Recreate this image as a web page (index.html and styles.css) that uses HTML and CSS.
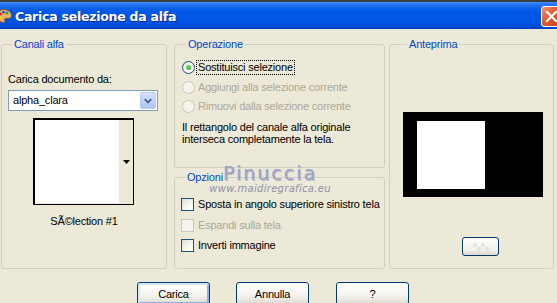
FILE: index.html
```html
<!DOCTYPE html>
<html>
<head>
<meta charset="utf-8">
<title>Carica selezione da alfa</title>
<link rel="stylesheet" href="styles.css">
</head>
<body>
<div class="window">
  <div class="titlebar">
    <svg class="app-icon" width="16" height="16" viewBox="0 0 16 16">
      <path d="M8 1.5C3.5 1.5 0.5 4.5 0.8 8.5c0.3 3.5 3.3 6 6.5 6 1.6 0 2-1 1.4-2-0.6-1 0-2 1.4-2h2.4c2 0 3.2-1.4 3-3.4C15.2 3.8 12 1.5 8 1.5z" fill="#e9b066" stroke="#7a4a18" stroke-width="0.8"/>
      <circle cx="4.5" cy="6" r="1.4" fill="#e02020"/>
      <circle cx="7.5" cy="4.2" r="1.4" fill="#2050e0"/>
      <circle cx="11" cy="5" r="1.4" fill="#20a030"/>
      <circle cx="4.2" cy="9.8" r="1.4" fill="#f0e020"/>
    </svg>
    <span class="title">Carica selezione da alfa</span>
    <div class="close">
      <svg width="21" height="21" viewBox="0 0 21 21"><path d="M6 6L15 15M15 6L6 15" stroke="#fff" stroke-width="2.2" stroke-linecap="square"/></svg>
    </div>
  </div>

  <div class="content">
    <div class="groups">
      <fieldset class="group g-canali">
        <legend>Canali alfa</legend>
        <div class="field-label">Carica documento da:</div>
        <div class="select">
          <span class="select-value">alpha_clara</span>
          <span class="select-btn">
            <svg width="15" height="17" viewBox="0 0 15 17"><path d="M4 7L7.5 10.5L11 7" fill="none" stroke="#4d6185" stroke-width="2"/></svg>
          </span>
        </div>
        <div class="swatch">
          <div class="swatch-white"></div>
          <div class="swatch-btn">
            <svg width="9" height="5" viewBox="0 0 9 5"><path d="M1 0H8L4.5 4z" fill="#000"/></svg>
          </div>
        </div>
        <div class="swatch-label">SÃ©lection #1</div>
      </fieldset>

      <div class="mid">
        <fieldset class="group g-op">
          <legend>Operazione</legend>
          <div class="opt-row first">
            <span class="radio checked"></span>
            <span class="opt-label focus">Sostituisci selezione</span>
          </div>
          <div class="opt-row r2 disabled">
            <span class="radio"></span>
            <span class="opt-label">Aggiungi alla selezione corrente</span>
          </div>
          <div class="opt-row r3 disabled">
            <span class="radio"></span>
            <span class="opt-label">Rimuovi dalla selezione corrente</span>
          </div>
          <p class="info">Il rettangolo del canale alfa originale<br>interseca completamente la tela.</p>
        </fieldset>

        <fieldset class="group g-opt">
          <legend>Opzioni</legend>
          <div class="chk-row first">
            <span class="check"></span>
            <span class="opt-label">Sposta in angolo superiore sinistro tela</span>
          </div>
          <div class="chk-row c2 disabled">
            <span class="check"></span>
            <span class="opt-label">Espandi sulla tela</span>
          </div>
          <div class="chk-row c3">
            <span class="check"></span>
            <span class="opt-label">Inverti immagine</span>
          </div>
        </fieldset>
      </div>

      <fieldset class="group g-prev">
        <legend>Anteprima</legend>
        <div class="preview"><div class="preview-white"></div></div>
        <div class="small-btn">
          <svg width="20" height="10" viewBox="0 0 20 10">
            <rect x="2" y="1" width="4" height="4" fill="#e4e4e4"/>
            <rect x="6" y="5" width="4" height="4" fill="#e4e4e4"/>
            <rect x="10" y="1" width="4" height="4" fill="#e4e4e4"/>
            <rect x="14" y="5" width="4" height="4" fill="#e4e4e4"/>
          </svg>
        </div>
      </fieldset>
    </div>

    <div class="buttons">
      <div class="btn default">Carica</div>
      <div class="btn">Annulla</div>
      <div class="btn q">?</div>
    </div>

    <div class="watermark">
      <div class="wm-name">Pinuccia</div>
      <div class="wm-url">www.maidiregrafica.eu</div>
    </div>
  </div>
</div>
</body>
</html>
```

FILE: styles.css
```css
* { box-sizing: border-box; }

html, body {
  margin: 0;
  padding: 0;
  width: 557px;
  height: 303px;
  overflow: hidden;
  background: #ece9d8;
}

body {
  font-family: "Liberation Sans", Arial, sans-serif;
  font-size: 11px;
  line-height: 13px;
  letter-spacing: -0.2px;
  color: #000;
}

.window {
  width: 557px;
  height: 303px;
  overflow: hidden;
}

/* Title bar */
.titlebar {
  height: 29px;
  display: flex;
  align-items: center;
  background: linear-gradient(to bottom,
    #3b3b3b 0px, #3b3b3b 2px,
    #4a90f8 2px, #2a78f4 4px, #0c62ea 8px,
    #0058e6 12px, #0055e5 22px, #004bd9 26px, #0040c8 29px);
}

.app-icon {
  margin-left: -4px;
  margin-top: 2px;
  flex: none;
}

.title {
  margin-left: 3px;
  color: #fff;
  font-family: "DejaVu Sans", "Liberation Sans", sans-serif;
  font-weight: bold;
  font-size: 12.5px;
  letter-spacing: -0.25px;
  text-shadow: 1px 1px 0 #0a2a8a;
  margin-top: 3px;
}

.close {
  margin-left: auto;
  margin-right: -5px;
  margin-top: 3px;
  width: 21px;
  height: 21px;
  border: 1px solid #fff;
  border-radius: 3px;
  background: linear-gradient(to bottom right, #f09070, #e05a32 45%, #c8401c);
  display: flex;
  align-items: center;
  justify-content: center;
}
.close svg { margin: -1px; }

/* Content */
.content {
  position: relative;
  padding: 9px 0 0 1px;
}

.groups {
  display: flex;
  height: 231px;
}

.group {
  margin: 0;
  padding: 0;
  min-width: 0;
  border: 1px solid #d0d0bf;
  border-radius: 3px;
}

.group legend {
  color: #0046d5;
  margin-left: 4px;
  padding: 0 2px;
  line-height: 13px;
}

.g-canali {
  width: 166px;
  display: flex;
  flex-direction: column;
  padding-left: 6px;
}

.field-label { margin-top: 22px; }

.select {
  margin-top: 4px;
  width: 150px;
  height: 21px;
  border: 1px solid #7f9db9;
  background: #fff;
  display: flex;
  align-items: center;
  padding: 1px;
}
.select-value {
  flex: 1;
  padding-left: 3px;
}
.select-btn {
  width: 16px;
  height: 17px;
  border: 1px solid #b8cbf4;
  border-radius: 2px;
  background: linear-gradient(to bottom, #d8e4fc, #bccff8 60%, #aec4f5);
  display: flex;
  align-items: center;
  justify-content: center;
}

.swatch {
  margin-top: 7px;
  margin-left: 25px;
  width: 101px;
  height: 87px;
  display: flex;
  border: 1px solid #808080;
  border-right-color: #000;
  border-bottom-color: #000;
  border-left: 2px solid #000;
  border-top: 2px solid #000;
  background: #ece9d8;
}
.swatch-white {
  width: 83px;
  background: #fff;
  border-bottom: 1px solid #e8e8e8;
}
.swatch-btn {
  flex: 1;
  display: flex;
  align-items: center;
  justify-content: center;
  background: #ece9d8;
  border-left: 1px solid #fff;
}
.swatch-btn svg { margin-left: 1px; }

.swatch-label {
  margin-top: 10px;
  text-align: center;
  padding-right: 6px;
}

/* Middle column */
.mid {
  margin-left: 7px;
  width: 211px;
  display: flex;
  flex-direction: column;
  gap: 3px;
}

.g-op { height: 130px; padding-left: 7px; }
.g-opt { flex: 1; padding-left: 6px; }

.opt-row, .chk-row {
  display: flex;
  align-items: center;
  height: 13px;
}
.opt-row.first { margin-top: 10px; }
.opt-row.r2 { margin-top: 7px; }
.opt-row.r3 { margin-top: 6px; }

.radio {
  width: 13px;
  height: 13px;
  border-radius: 50%;
  border: 1px solid #1c5180;
  background: radial-gradient(circle at 65% 65%, #fff 30%, #dcdcd6 100%);
  display: flex;
  align-items: center;
  justify-content: center;
  flex: none;
}
.radio.checked::after {
  content: "";
  width: 5px;
  height: 5px;
  border-radius: 50%;
  background: radial-gradient(circle at 40% 40%, #7cdb6e, #21a121);
}
.disabled .radio,
.disabled .check {
  border-color: #cac8bb;
  background: #f4f3ee;
}
.disabled .opt-label { color: #aca899; }

.opt-label { margin-left: 3px; white-space: nowrap; }
.opt-label.focus {
  outline: 1px dotted #000;
  padding: 0 1px;
  margin-left: 2px;
}

.info {
  margin: 8px 0 0 0;
  line-height: 12px;
}

.chk-row.first { margin-top: 14px; }
.chk-row.c2 { margin-top: 8px; }
.chk-row.c3 { margin-top: 7px; }

.check {
  width: 13px;
  height: 13px;
  border: 1px solid #1c5180;
  background: linear-gradient(135deg, #dcdcd6, #fff 80%);
  flex: none;
}
.chk-row .opt-label { margin-left: 4px; }

/* Preview */
.g-prev {
  margin-left: 4px;
  width: 165px;
  padding-left: 13px;
}
.preview {
  margin-top: 61px;
  width: 140px;
  height: 85px;
  background: #000;
  padding: 9px 0 0 14px;
}
.preview-white {
  width: 68px;
  height: 68px;
  background: #fff;
}
.small-btn {
  margin-top: 40px;
  margin-left: 59px;
  width: 37px;
  height: 19px;
  border: 1px solid #003c74;
  border-radius: 3px;
  background: linear-gradient(to bottom, #fff, #f2f1ea 70%, #dcd8cc);
  display: flex;
  align-items: center;
  justify-content: center;
}

/* Buttons */
.buttons {
  display: flex;
  gap: 26px;
  margin-top: 13px;
  padding-left: 136px;
}
.btn {
  width: 73px;
  height: 23px;
  border: 1px solid #003c74;
  border-radius: 3px;
  background: linear-gradient(to bottom, #fff, #f4f3ee 60%, #e0ddd2 95%, #d6d0c5);
  display: flex;
  align-items: center;
  justify-content: center;
  padding-top: 1px;
}
.btn.default {
  box-shadow: inset 1px 1px 0 1px #cee7ff, inset -1px -1px 0 1px #8ab0f0;
}
.btn.q { margin-left: 1px; }

/* Watermark */
.watermark {
  position: absolute;
  left: 208px;
  top: 134px;
  text-align: center;
  width: 124px;
  pointer-events: none;
  letter-spacing: 0;
}
.wm-name {
  font-family: "DejaVu Sans", sans-serif;
  font-size: 19px;
  line-height: 20px;
  letter-spacing: 2px;
  color: #9ca2c8;
  text-shadow: 1px 1px 0 #b8b8c0;
}
.wm-url {
  font-family: "DejaVu Sans", sans-serif;
  font-style: italic;
  font-size: 10px;
  line-height: 11px;
  color: #8e92aa;
  letter-spacing: 0.3px;
}
```
